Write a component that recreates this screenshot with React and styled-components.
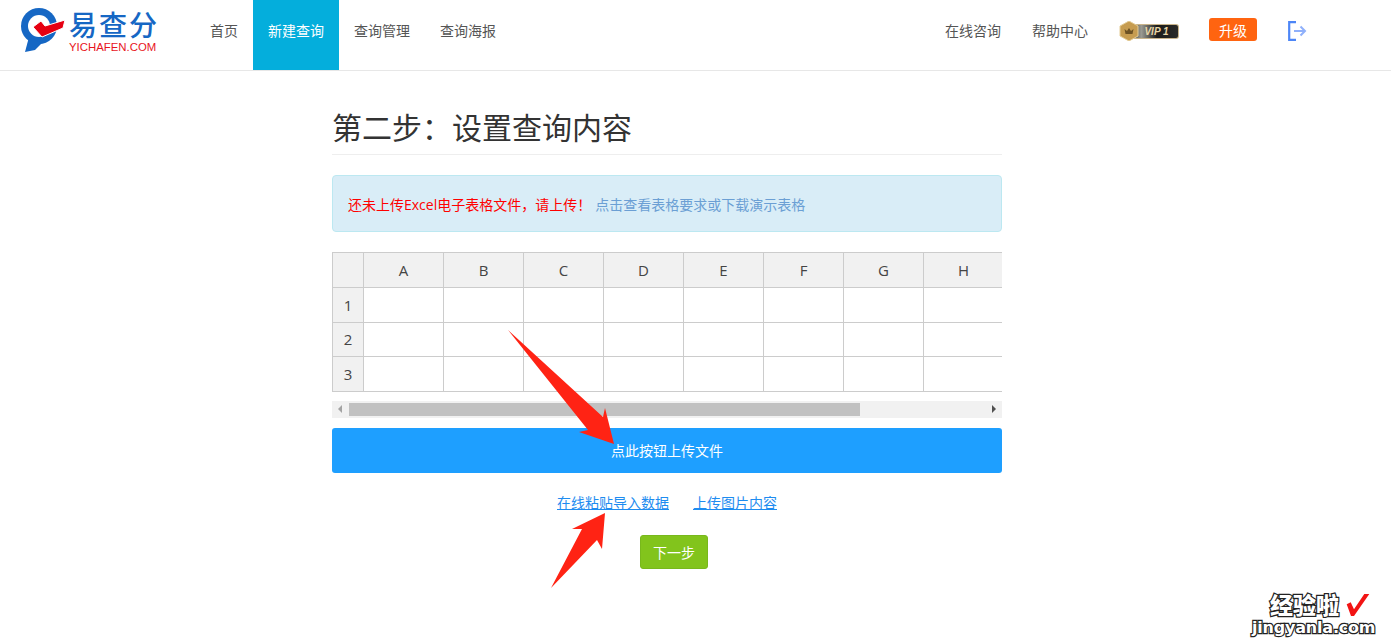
import React from 'react'
import styled, { createGlobalStyle } from 'styled-components'

const GlobalStyle = createGlobalStyle`
  html, body { margin: 0; padding: 0; background: #fff; }
  body {
    font-family: "Open Sans", "Noto Sans CJK SC", sans-serif;
    font-size: 14px;
    color: #333;
    overflow: hidden;
  }
  * { box-sizing: border-box; }
`

const Page = styled.div`
  position: relative;
  width: 1391px;
  height: 644px;
  overflow: hidden;
`
const Header = styled.header`
  display: flex;
  align-items: stretch;
  height: 71px;
  padding-left: 20px;
  border-bottom: 1px solid #e7e7e7;
`
const Logo = styled.div`
  display: flex;
  align-items: center;
  width: 175px;
  height: 60px;
`
const LogoWords = styled.div`
  display: flex;
  flex-direction: column;
  align-items: flex-start;
  margin-left: 1px;
`
const LogoCn = styled.div`
  font-size: 28px;
  line-height: 30px;
  height: 30px;
  font-weight: 500;
  color: #1667c4;
  letter-spacing: 2px;
  margin-top: 2px;
`
const LogoEn = styled.div`
  font-family: "Liberation Sans", sans-serif;
  font-size: 11.4px;
  line-height: 12px;
  margin-top: 1px;
  color: #e8141c;
  white-space: nowrap;
`
const NavItem = styled.a`
  display: flex;
  align-items: center;
  height: 70px;
  padding: 0 15px 10px;
  color: ${p => (p.$active ? '#fff' : '#555')};
  background: ${p => (p.$active ? '#04aedc' : 'transparent')};
  white-space: nowrap;
`
const RightNav = styled.div`
  display: flex;
  align-items: center;
  margin-left: auto;
  padding-right: 84px;
  height: 62px;
`
const RightLink = styled.a`
  color: #555;
  margin: -2px 31px 0 0;
  white-space: nowrap;
`
const VipBadge = styled.div`
  position: relative;
  display: flex;
  align-items: center;
  width: 60px;
  height: 20px;
  margin-right: 30px;
`
const VipBar = styled.div`
  width: 48px;
  height: 15px;
  margin-left: 12px;
  padding-left: 4px;
  border-radius: 0 3px 3px 0;
  background: linear-gradient(90deg, #3a3a38 0%, #9a9a92 22%, #1c1c1a 55%, #2a2a28 100%);
  border: 1px solid #c9b48a;
  border-left: none;
  color: #e9d6a6;
  font: italic 700 10px/13px "Liberation Sans", sans-serif;
  text-align: center;
  white-space: nowrap;
`
const VipHex = styled.svg`
  position: absolute;
  left: 0;
  top: 0;
`
const Upgrade = styled.a`
  display: flex;
  align-items: center;
  justify-content: center;
  width: 48px;
  height: 23px;
  margin: -3px 31px 0 0;
  border-radius: 3px;
  background: #ff6410;
  color: #fff;
`
const Main = styled.main`
  width: 670px;
  margin: 0 0 0 332px;
`
const Title = styled.h1`
  margin: 0;
  height: 84px;
  padding-top: 37px;
  font-size: 30px;
  line-height: 40px;
  font-weight: 400;
  color: #333;
  border-bottom: 1px solid #eee;
`
const Notice = styled.div`
  display: flex;
  align-items: center;
  height: 57px;
  margin-top: 20px;
  padding: 0 15px;
  background: #d9edf7;
  border: 1px solid #bce8f1;
  border-radius: 4px;
`
const NoticeWarn = styled.span`
  color: #f00;
`
const NoticeLink = styled.a`
  margin-left: 4px;
  color: #6b9fd4;
`
const SheetWrap = styled.div`
  width: 670px;
  margin-top: 20px;
  overflow: hidden;
`
const Sheet = styled.table`
  border-collapse: collapse;
  table-layout: fixed;
  width: 671px;
  font-size: 15px;
  color: #444;
`
const HeadCell = styled.th`
  width: 80px;
  height: 35px;
  padding: 0;
  font-weight: 400;
  background: #f1f1f1;
  border: 1px solid #ccc;
`
const CornerCell = styled(HeadCell)`
  width: 31px;
`
const RowHead = styled(HeadCell)`
  width: 31px;
  height: 34.6px;
`
const Cell = styled.td`
  padding: 0;
  background: #fff;
  border: 1px solid #ccc;
`
const ScrollTrack = styled.div`
  position: relative;
  display: flex;
  align-items: center;
  justify-content: space-between;
  height: 17px;
  margin-top: 9px;
  padding: 0 6px;
  background: #f1f1f1;
`
const ScrollThumb = styled.div`
  position: absolute;
  left: 17px;
  top: 2px;
  width: 511px;
  height: 13px;
  background: #c1c1c1;
`
const ScrollArrow = styled.span`
  width: 0;
  height: 0;
  border-top: 4px solid transparent;
  border-bottom: 4px solid transparent;
  border-${p => (p.$dir === 'left' ? 'right' : 'left')}: 4px solid ${p => (p.$dir === 'left' ? '#a3a3a3' : '#505050')};
`
const UploadButton = styled.button`
  display: block;
  width: 100%;
  height: 45px;
  margin-top: 10px;
  border: none;
  border-radius: 3px;
  background: #1e9fff;
  color: #fff;
  font: inherit;
  font-size: 14px;
`
const LinkRow = styled.div`
  display: flex;
  justify-content: center;
  gap: 24px;
  margin-top: 20px;
  line-height: 20px;
`
const TextLink = styled.a`
  color: #1e8cf0;
  text-decoration: underline;
`
const NextRow = styled.div`
  display: flex;
  justify-content: center;
  margin-top: 22px;
  padding-left: 14px;
`
const NextButton = styled.button`
  width: 68px;
  height: 34px;
  border: 1px solid #78b81c;
  border-radius: 3px;
  background: #82c41c;
  color: #fff;
  font: inherit;
  font-size: 14px;
`
const Annotation = styled.svg`
  position: absolute;
  left: ${p => p.$x}px;
  top: ${p => p.$y}px;
`
const Watermark = styled.div`
  position: absolute;
  left: 1252px;
  top: 592px;
  width: 130px;
  font-weight: 900;
  color: #fff;
  -webkit-text-stroke: 2.4px #222;
  paint-order: stroke fill;
  white-space: nowrap;
`
const WatermarkCn = styled.div`
  padding-left: 18px;
  font-size: 23px;
  line-height: 27px;
`
const WatermarkEn = styled.div`
  font-family: "DejaVu Sans", sans-serif;
  font-size: 16px;
  line-height: 18px;
  letter-spacing: -0.2px;
`

const columns = ['A', 'B', 'C', 'D', 'E', 'F', 'G', 'H']
const rows = [1, 2, 3]

function LogoMark() {
  return (
    <svg width="48" height="46" viewBox="0 0 48 46">
      <circle cx="19" cy="19" r="18" fill="#1667c4" />
      <polygon points="9,30 5,45 15,43 22,36" fill="#1667c4" />
      <circle cx="19" cy="19" r="11" fill="#fff" />
      <polygon points="13,20 21,14 25,19 45,13 43,21 22,30" fill="#e60012" stroke="#fff" strokeWidth="1" />
    </svg>
  )
}

function CrownHex() {
  return (
    <VipHex width="20" height="20" viewBox="0 0 20 20">
      <path d="M10 0l9 5v10l-9 5-9-5V5z" fill="#c69c50" stroke="#e4cd97" strokeWidth="1" />
      <path d="M5.500 8l2.500 2L10 7l2 3 2.500-2-1 5h-7z" fill="#6d5224" />
    </VipHex>
  )
}

function LogoutIcon() {
  return (
    <svg width="19" height="20" viewBox="0 0 19 20">
      <path d="M8 1.200H1.200v17.600H8" fill="none" stroke="#4d86f7" strokeWidth="2.200" />
      <path d="M6 10h11M12.500 5.500L17 10l-4.500 4.500" fill="none" stroke="#8fb0fb" strokeWidth="2" />
    </svg>
  )
}

export default function App() {
  return (
    <Page>
      <GlobalStyle />
      <Header>
        <Logo>
          <LogoMark />
          <LogoWords>
            <LogoCn>易查分</LogoCn>
            <LogoEn>YICHAFEN.COM</LogoEn>
          </LogoWords>
        </Logo>
        <NavItem>首页</NavItem>
        <NavItem $active>新建查询</NavItem>
        <NavItem>查询管理</NavItem>
        <NavItem>查询海报</NavItem>
        <RightNav>
          <RightLink>在线咨询</RightLink>
          <RightLink>帮助中心</RightLink>
          <VipBadge>
            <VipBar>VIP 1</VipBar>
            <CrownHex />
          </VipBadge>
          <Upgrade>升级</Upgrade>
          <LogoutIcon />
        </RightNav>
      </Header>
      <Main>
        <Title>第二步：设置查询内容</Title>
        <Notice>
          <NoticeWarn>还未上传Excel电子表格文件，请上传！</NoticeWarn>
          <NoticeLink>点击查看表格要求或下载演示表格</NoticeLink>
        </Notice>
        <SheetWrap>
          <Sheet>
            <thead>
              <tr>
                <CornerCell />
                {columns.map(c => <HeadCell key={c}>{c}</HeadCell>)}
              </tr>
            </thead>
            <tbody>
              {rows.map(r => (
                <tr key={r}>
                  <RowHead>{r}</RowHead>
                  {columns.map(c => <Cell key={c} />)}
                </tr>
              ))}
            </tbody>
          </Sheet>
        </SheetWrap>
        <ScrollTrack>
          <ScrollArrow $dir="left" />
          <ScrollThumb />
          <ScrollArrow $dir="right" />
        </ScrollTrack>
        <UploadButton>点此按钮上传文件</UploadButton>
        <LinkRow>
          <TextLink>在线粘贴导入数据</TextLink>
          <TextLink>上传图片内容</TextLink>
        </LinkRow>
        <NextRow>
          <NextButton>下一步</NextButton>
        </NextRow>
      </Main>
      <Annotation $x={500} $y={325} width="120" height="125" viewBox="500 325 120 125">
        <polygon points="508,330 603,417 605,408 614,444 579,432 588,430" fill="#ff2314" />
      </Annotation>
      <Annotation $x={545} $y={508} width="65" height="85" viewBox="545 508 65 85">
        <polygon points="551,588 582,529 572,529 605,513 602,549 597,540" fill="#ff2314" />
      </Annotation>
      <Watermark>
        <WatermarkCn>经验啦</WatermarkCn>
        <WatermarkEn>jingyanla.com</WatermarkEn>
      </Watermark>
      <Annotation $x={1340} $y={590} width="35" height="30" viewBox="1340 590 35 30">
        <polygon points="1346.700,604.300 1350.700,602.300 1354,609.300 1364.300,594 1369.300,594 1354,616 1351,616" fill="#f21414" />
      </Annotation>
    </Page>
  )
}
